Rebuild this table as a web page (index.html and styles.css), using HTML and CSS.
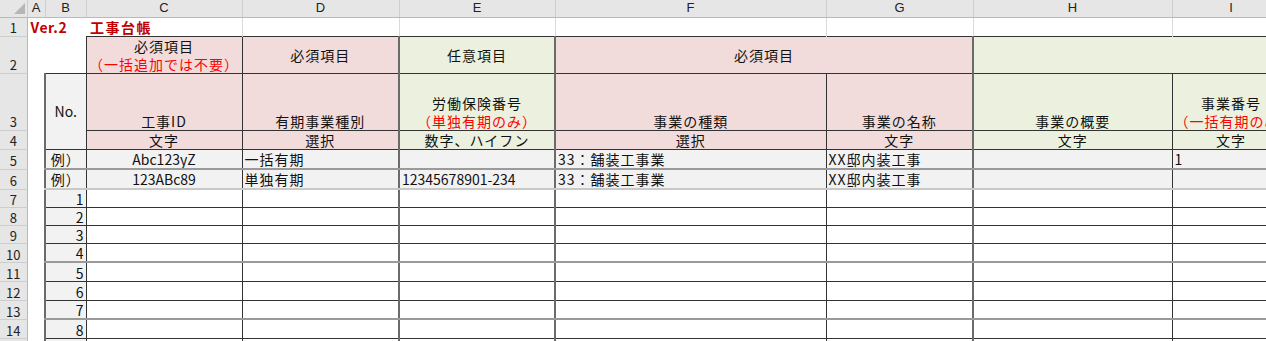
FILE: index.html
```html
<!DOCTYPE html>
<html lang="ja">
<head>
<meta charset="utf-8">
<title>工事台帳</title>
<link rel="stylesheet" href="styles.css">
</head>
<body>
<table class="sheet">
  <colgroup>
    <col class="w-rh"><col class="w-a"><col class="w-b"><col class="w-c"><col class="w-d"><col class="w-e"><col class="w-f"><col class="w-g"><col class="w-h"><col class="w-i">
  </colgroup>
  <tr class="r-col">
    <th class="corner"><span class="tri"></span></th>
    <th class="ch">A</th><th class="ch">B</th><th class="ch">C</th><th class="ch">D</th><th class="ch">E</th><th class="ch">F</th><th class="ch">G</th><th class="ch">H</th><th class="ch">I</th>
  </tr>
  <tr class="r1">
    <th class="rn">1</th>
    <td class="title" colspan="2">Ver.2</td>
    <td class="title title-jp gl">工事台帳</td>
    <td class="gl"></td><td class="gl"></td><td class="gl"></td><td class="gl"></td><td class="gl"></td><td class="gl"></td>
  </tr>
  <tr class="r2">
    <th class="rn">2</th>
    <td></td><td></td>
    <td class="pk bx mid">必須項目<br><span class="red">（一括追加では不要）</span></td>
    <td class="pk bx mid">必須項目</td>
    <td class="gr bx mid thick-l">任意項目</td>
    <td class="pk bx mid thick-l" colspan="2">必須項目</td>
    <td class="gr bx mid thick-l" colspan="2"></td>
  </tr>
  <tr class="r3">
    <th class="rn">3</th>
    <td></td>
    <td class="no bx mid thick-l lat" rowspan="2">No.</td>
    <td class="pk bx">工事ID</td>
    <td class="pk bx">有期事業種別</td>
    <td class="gr bx thick-l">労働保険番号<br><span class="red">（単独有期のみ）</span></td>
    <td class="pk bx thick-l">事業の種類</td>
    <td class="pk bx">事業の名称</td>
    <td class="gr bx thick-l">事業の概要</td>
    <td class="gr bx">事業番号<br><span class="red">（一括有期のみ）</span></td>
  </tr>
  <tr class="r4">
    <th class="rn">4</th>
    <td></td>
    <td class="pk bx">文字</td>
    <td class="pk bx">選択</td>
    <td class="gr bx thick-l">数字、ハイフン</td>
    <td class="pk bx thick-l">選択</td>
    <td class="pk bx">文字</td>
    <td class="gr bx thick-l">文字</td>
    <td class="gr bx">文字</td>
  </tr>
  <tr class="r5 ex">
    <th class="rn">5</th>
    <td></td>
    <td class="bx thick-l">例）</td>
    <td class="bx lat">Abc123yZ</td>
    <td class="bx lt">一括有期</td>
    <td class="bx lt thick-l"></td>
    <td class="bx lt thick-l">33：舗装工事業</td>
    <td class="bx lt">XX邸内装工事</td>
    <td class="bx lt thick-l"></td>
    <td class="bx lt lat">1</td>
  </tr>
  <tr class="r6 ex">
    <th class="rn">6</th>
    <td></td>
    <td class="bx thick-l">例）</td>
    <td class="bx lat">123ABc89</td>
    <td class="bx lt">単独有期</td>
    <td class="bx lt thick-l lat">12345678901-234</td>
    <td class="bx lt thick-l">33：舗装工事業</td>
    <td class="bx lt">XX邸内装工事</td>
    <td class="bx lt thick-l"></td>
    <td class="bx lt"></td>
  </tr>
  <tr class="rd h18 ln-dark"><th class="rn">7</th><td></td><td class="bx num thick-l">1</td><td class="bx"></td><td class="bx"></td><td class="bx thick-l"></td><td class="bx thick-l"></td><td class="bx"></td><td class="bx thick-l"></td><td class="bx"></td></tr>
  <tr class="rd h18 ln-dark"><th class="rn">8</th><td></td><td class="bx num thick-l">2</td><td class="bx"></td><td class="bx"></td><td class="bx thick-l"></td><td class="bx thick-l"></td><td class="bx"></td><td class="bx thick-l"></td><td class="bx"></td></tr>
  <tr class="rd h18 ln-dark"><th class="rn">9</th><td></td><td class="bx num thick-l">3</td><td class="bx"></td><td class="bx"></td><td class="bx thick-l"></td><td class="bx thick-l"></td><td class="bx"></td><td class="bx thick-l"></td><td class="bx"></td></tr>
  <tr class="rd h19 ln-gray"><th class="rn">10</th><td></td><td class="bx num thick-l">4</td><td class="bx"></td><td class="bx"></td><td class="bx thick-l"></td><td class="bx thick-l"></td><td class="bx"></td><td class="bx thick-l"></td><td class="bx"></td></tr>
  <tr class="rd h19 ln-dark"><th class="rn">11</th><td></td><td class="bx num thick-l">5</td><td class="bx"></td><td class="bx"></td><td class="bx thick-l"></td><td class="bx thick-l"></td><td class="bx"></td><td class="bx thick-l"></td><td class="bx"></td></tr>
  <tr class="rd h19 ln-dark"><th class="rn">12</th><td></td><td class="bx num thick-l">6</td><td class="bx"></td><td class="bx"></td><td class="bx thick-l"></td><td class="bx thick-l"></td><td class="bx"></td><td class="bx thick-l"></td><td class="bx"></td></tr>
  <tr class="rd h19 ln-gray"><th class="rn">13</th><td></td><td class="bx num thick-l">7</td><td class="bx"></td><td class="bx"></td><td class="bx thick-l"></td><td class="bx thick-l"></td><td class="bx"></td><td class="bx thick-l"></td><td class="bx"></td></tr>
  <tr class="rd h19 ln-dark"><th class="rn">14</th><td></td><td class="bx num thick-l">8</td><td class="bx"></td><td class="bx"></td><td class="bx thick-l"></td><td class="bx thick-l"></td><td class="bx"></td><td class="bx thick-l"></td><td class="bx"></td></tr>
  <tr class="rd h19 ln-dark"><th class="rn"></th><td></td><td class="bx num thick-l"></td><td class="bx"></td><td class="bx"></td><td class="bx thick-l"></td><td class="bx thick-l"></td><td class="bx"></td><td class="bx thick-l"></td><td class="bx"></td></tr>
</table>
</body>
</html>
```

FILE: styles.css
```css
html, body {
  margin: 0;
  padding: 0;
  background: #ffffff;
  overflow: hidden;
}

.sheet {
  border-collapse: collapse;
  table-layout: fixed;
  width: 1290px;
  font-family: "Noto Sans CJK JP", "Noto Sans", sans-serif;
  font-size: 14px;
  color: #111;
}

.w-rh { width: 27px; }
.w-a { width: 18px; }
.w-b { width: 41px; }
.w-c { width: 156px; }
.w-d { width: 157px; }
.w-e { width: 156px; }
.w-f { width: 271px; }
.w-g { width: 147px; }
.w-h { width: 199px; }
.w-i { width: 118px; }

.sheet td, .sheet th {
  padding: 0 2px;
  line-height: 18px;
  white-space: nowrap;
  overflow: hidden;
  vertical-align: bottom;
  text-align: center;
  font-weight: 400;
}
.sheet td { letter-spacing: 1px; }
.sheet td.lat { letter-spacing: 0; }

/* column header row */
.r-col { height: 17px; }
.sheet .r-col th {
  background: #e6e6e6;
  border-bottom: 1px solid #b9b9b9;
  border-right: 1px solid #cfcfcf;
  font-family: "Liberation Sans", Arial, sans-serif;
  font-size: 13px;
  line-height: 16px;
  color: #222;
  vertical-align: middle;
}
.corner { position: relative; }
.tri {
  position: absolute;
  right: 2px;
  bottom: 3px;
  width: 0;
  height: 0;
  border-left: 11px solid transparent;
  border-bottom: 11px solid #b6b6b6;
}

/* row header numbers */
.sheet th.rn {
  background: #e6e6e6;
  border-right: 1px solid #b9b9b9;
  border-bottom: 1px solid #cdcdcd;
  font-size: 13px;
  color: #222;
  line-height: 17px;
}

/* row heights */
.r1 { height: 19px; }
.r2 { height: 37px; }
.r3 { height: 57px; }
.r4 { height: 19px; }
.r5 { height: 20px; }
.r6 { height: 20px; }
.h18 { height: 18px; }
.h19 { height: 19px; }
.sheet .rd td, .sheet .rd th.rn { line-height: 15px; }

/* title row */
.sheet td.title {
  text-align: left;
  color: #c00000;
  font-weight: 700;
  font-size: 14px;
  padding-left: 3px;
  letter-spacing: 0.5px;
}
.sheet td.title-jp {
  letter-spacing: 1.5px;
  padding-left: 4px;
}
.gl { border-right: 1px solid #d9d9d9; }

/* bordered cells */
.bx { border: 1px solid #333; }
.thick-l { border-left: 2px solid #6b6b6b; }

.pk { background: #f2dcdb; }
.gr { background: #ebf1de; }
.sheet td.no { background: #f2f2f2; vertical-align: middle; }
.sheet td.mid { vertical-align: middle; }
.red { color: #ff0000; }

.ex td.bx { background: #f2f2f2; }
.sheet td.lt { text-align: left; }
.sheet td.num { text-align: right; background: #f2f2f2; letter-spacing: 0; }

.r5 td.bx { border-bottom: 2px solid #9a9a9a; }
.r6 td.bx { border-bottom: 2px solid #c8c8c8; }
.ln-dark td.bx { border-bottom: 1px solid #333; }
.ln-gray td.bx { border-bottom: 2px solid #9a9a9a; }
```
